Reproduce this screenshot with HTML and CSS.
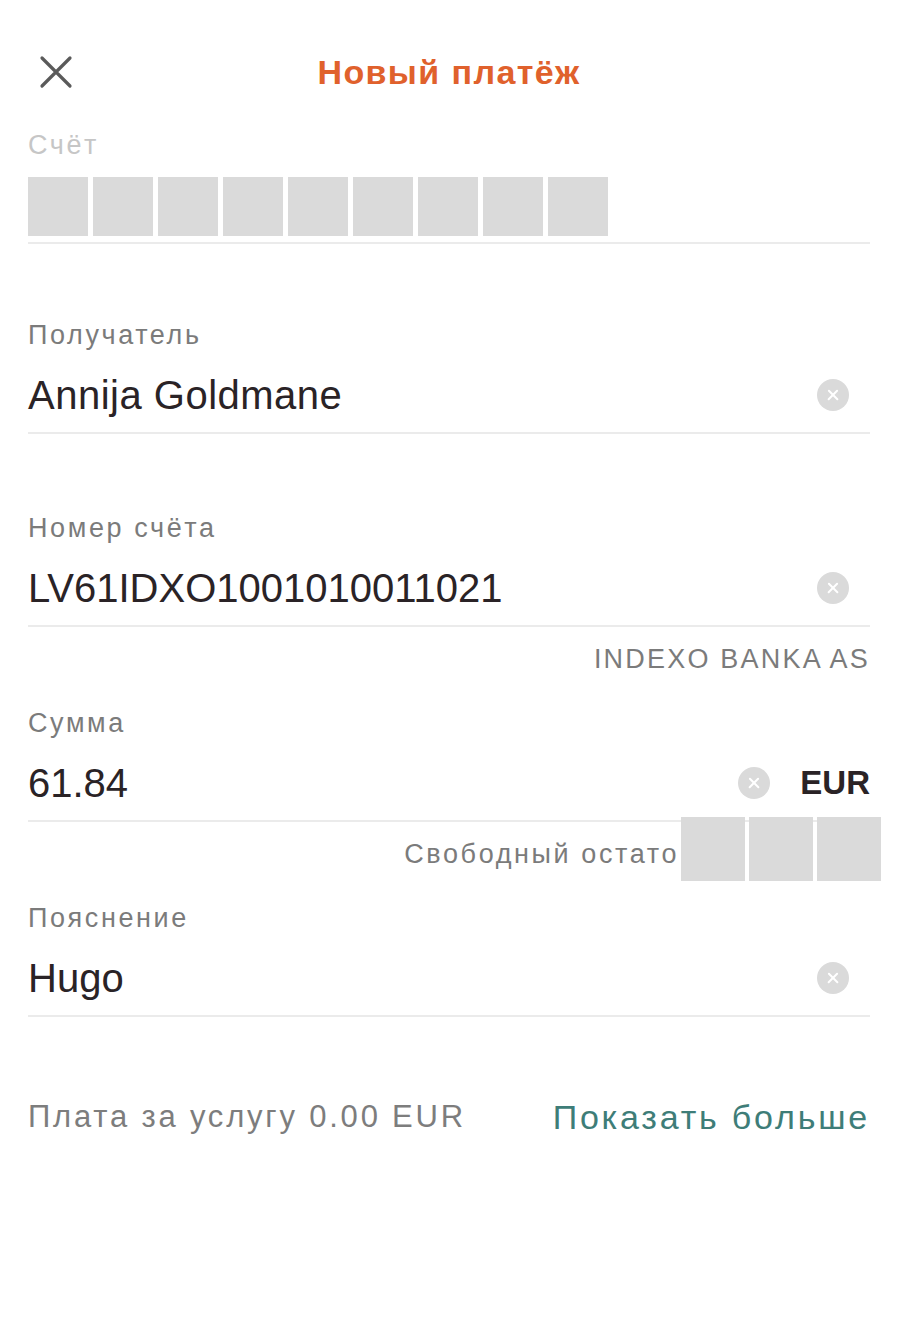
FILE: index.html
```html
<!DOCTYPE html>
<html lang="ru">
<head>
  <meta charset="UTF-8">
  <meta name="viewport" content="width=device-width, initial-scale=1.0">
  <title>Новый платёж</title>
  <link rel="stylesheet" href="styles.css">
</head>

<body>
  <div class="page">
    <!-- Header -->
    <div class="header">
      <span class="close-btn">
        <svg width="34" height="34" viewBox="0 0 34 34">
          <path d="M3 3 L31 31 M31 3 L3 31" stroke="#5a5a5a" stroke-width="3.2" stroke-linecap="round" fill="none"/>
        </svg>
      </span>
      <h1 class="title">Новый платёж</h1>
    </div>

    <!-- Account (hidden digits) -->
    <div class="field field-first">
      <div class="label label-muted">Счёт</div>
      <div class="value-row">
        <div class="mask-row">
          <span class="mask"></span><span class="mask"></span><span class="mask"></span>
          <span class="mask"></span><span class="mask"></span><span class="mask"></span>
          <span class="mask"></span><span class="mask"></span><span class="mask"></span>
        </div>
      </div>
    </div>

    <!-- Recipient -->
    <div class="field">
      <div class="label">Получатель</div>
      <div class="value-row">
        <span class="value value-name">Annija Goldmane</span>
        <span class="clear-btn"></span>
      </div>
    </div>

    <!-- Account number -->
    <div class="field field-with-note">
      <div class="label">Номер счёта</div>
      <div class="value-row">
        <span class="value">LV61IDXO1001010011021</span>
        <span class="clear-btn"></span>
      </div>
    </div>
    <div class="note">INDEXO BANKA AS</div>

    <!-- Amount -->
    <div class="field field-with-note">
      <div class="label">Сумма</div>
      <div class="value-row">
        <span class="value">61.84</span>
        <span class="clear-btn clear-btn-amount"></span>
        <span class="currency">EUR</span>
      </div>
    </div>
    <div class="note note-balance">
      <span>Свободный остато</span>
      <span class="mask mask-small"></span><span class="mask mask-small"></span><span class="mask mask-small"></span>
    </div>

    <!-- Description -->
    <div class="field">
      <div class="label">Пояснение</div>
      <div class="value-row">
        <span class="value">Hugo</span>
        <span class="clear-btn"></span>
      </div>
    </div>

    <!-- Fee -->
    <div class="footer-row">
      <span class="fee">Плата за услугу 0.00 EUR</span>
      <span class="show-more">Показать больше</span>
    </div>
  </div>
</body>
</html>
```

FILE: styles.css
```css
body {
  margin: 0;
  background: #ffffff;
  font-family: "Liberation Sans", Arial, sans-serif;
  color: #2a2326;
}

.page {
  padding: 0 30px 0 28px;
}

.header {
  margin-top: 40px;
  height: 64px;
  display: flex;
  align-items: center;
  justify-content: center;
  position: relative;
}

.close-btn {
  position: absolute;
  left: 11px;
  top: 15px;
  width: 34px;
  height: 34px;
}

.title {
  margin: 0;
  font-size: 34px;
  font-weight: bold;
  letter-spacing: 1.4px;
  color: #e0612c;
}

.field {
  margin-bottom: 79px;
  border-bottom: 2px solid #ebebeb;
}

.field-first {
  margin-top: 26px;
  margin-bottom: 76px;
}

.field-with-note {
  margin-bottom: 0;
}

.label {
  height: 30px;
  line-height: 30px;
  font-size: 27px;
  letter-spacing: 2.6px;
  color: #7b7b7b;
}

.label-muted {
  color: #c6c6c6;
}

.value-row {
  margin-top: 8px;
  height: 74px;
  display: flex;
  align-items: center;
}

.value {
  flex: 1;
  font-size: 40px;
}

.value-name {
  letter-spacing: 0.5px;
}

.clear-btn {
  width: 32px;
  height: 32px;
  border-radius: 50%;
  background: #dadada;
  margin-right: 21px;
  position: relative;
}

.clear-btn::before,
.clear-btn::after {
  content: "";
  position: absolute;
  left: 9px;
  top: 15px;
  width: 14px;
  height: 2.4px;
  background: #ffffff;
  border-radius: 1px;
  transform: rotate(45deg);
}

.clear-btn::after {
  transform: rotate(-45deg);
}

.clear-btn-amount {
  margin-right: 30px;
}

.currency {
  font-size: 33px;
  font-weight: bold;
  color: #2a2326;
}

.mask-row {
  display: flex;
  gap: 5px;
  margin-top: 2px;
}

.mask {
  display: block;
  width: 60px;
  height: 59px;
  background: #dadada;
}

.note {
  height: 64px;
  line-height: 64px;
  margin-bottom: 17px;
  text-align: right;
  font-size: 27px;
  letter-spacing: 2.2px;
  color: #7b7b7b;
}

.note-balance {
  display: flex;
  justify-content: flex-end;
  align-items: center;
  gap: 4px;
  margin-right: -11px;
  letter-spacing: 2.6px;
}

.note-balance span:first-child {
  margin-right: -2px;
}

.mask-small {
  width: 64px;
  height: 64px;
  margin-top: -10px;
}

.footer-row {
  margin-top: -9px;
  height: 60px;
  display: flex;
  align-items: center;
  justify-content: space-between;
}

.fee {
  font-size: 31px;
  letter-spacing: 2.8px;
  color: #7d7d7d;
}

.show-more {
  font-size: 34px;
  letter-spacing: 2.8px;
  color: #3e7d78;
}
```
